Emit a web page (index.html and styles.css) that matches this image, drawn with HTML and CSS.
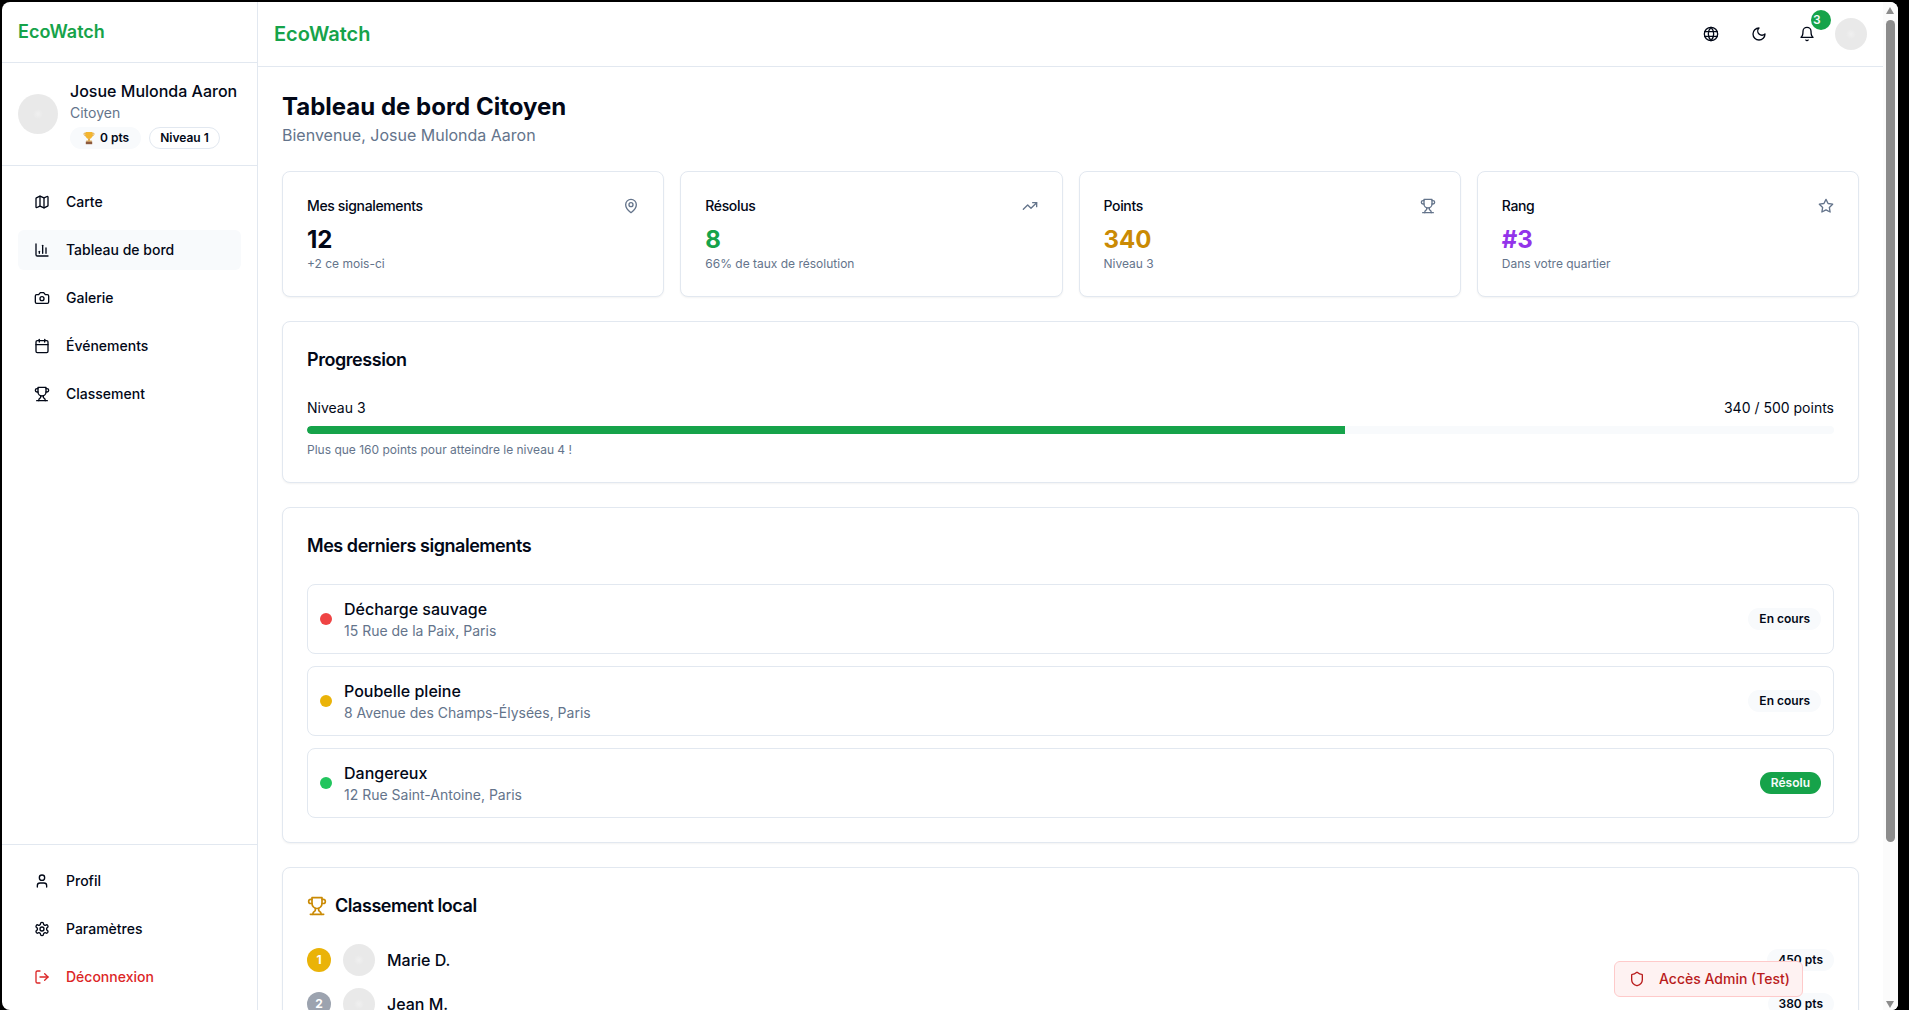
FILE: index.html
```html
<!DOCTYPE html>
<html lang="fr">
<head>
<meta charset="utf-8">
<title>EcoWatch</title>
<link rel="stylesheet" href="styles.css">
</head>
<body>
<svg class="sprite" xmlns="http://www.w3.org/2000/svg">
  <symbol id="i-map" viewBox="0 0 24 24"><path d="M14.106 5.553a2 2 0 0 0 1.788 0l3.659-1.83A1 1 0 0 1 21 4.619v12.764a1 1 0 0 1-.553.894l-4.553 2.277a2 2 0 0 1-1.788 0l-4.212-2.106a2 2 0 0 0-1.788 0l-3.659 1.83A1 1 0 0 1 3 19.381V6.618a1 1 0 0 1 .553-.894l4.553-2.277a2 2 0 0 1 1.788 0z"/><path d="M15 5.764v15"/><path d="M9 3.236v15"/></symbol>
  <symbol id="i-chart" viewBox="0 0 24 24"><path d="M3 3v16a2 2 0 0 0 2 2h16"/><path d="M18 17V9"/><path d="M13 17V5"/><path d="M8 17v-3"/></symbol>
  <symbol id="i-camera" viewBox="0 0 24 24"><path d="M14.5 4h-5L7 7H4a2 2 0 0 0-2 2v9a2 2 0 0 0 2 2h16a2 2 0 0 0 2-2V9a2 2 0 0 0-2-2h-3l-2.5-3z"/><circle cx="12" cy="13" r="3"/></symbol>
  <symbol id="i-calendar" viewBox="0 0 24 24"><path d="M8 2v4"/><path d="M16 2v4"/><rect width="18" height="18" x="3" y="4" rx="2"/><path d="M3 10h18"/></symbol>
  <symbol id="i-trophy" viewBox="0 0 24 24"><path d="M6 9H4.5a2.5 2.5 0 0 1 0-5H6"/><path d="M18 9h1.5a2.5 2.5 0 0 0 0-5H18"/><path d="M4 22h16"/><path d="M10 14.66V17c0 .55-.47.98-.97 1.21C7.85 18.75 7 20.24 7 22"/><path d="M14 14.66V17c0 .55.47.98.97 1.21C16.15 18.75 17 20.24 17 22"/><path d="M18 2H6v7a6 6 0 0 0 12 0V2Z"/></symbol>
  <symbol id="i-user" viewBox="0 0 24 24"><path d="M19 21v-2a4 4 0 0 0-4-4H9a4 4 0 0 0-4 4v2"/><circle cx="12" cy="7" r="4"/></symbol>
  <symbol id="i-settings" viewBox="0 0 24 24"><path d="M12.22 2h-.44a2 2 0 0 0-2 2v.18a2 2 0 0 1-1 1.73l-.43.25a2 2 0 0 1-2 0l-.15-.08a2 2 0 0 0-2.73.73l-.22.38a2 2 0 0 0 .73 2.73l.15.1a2 2 0 0 1 1 1.72v.51a2 2 0 0 1-1 1.74l-.15.09a2 2 0 0 0-.73 2.73l.22.38a2 2 0 0 0 2.73.73l.15-.08a2 2 0 0 1 2 0l.43.25a2 2 0 0 1 1 1.73V20a2 2 0 0 0 2 2h.44a2 2 0 0 0 2-2v-.18a2 2 0 0 1 1-1.73l.43-.25a2 2 0 0 1 2 0l.15.08a2 2 0 0 0 2.73-.73l.22-.39a2 2 0 0 0-.73-2.73l-.15-.08a2 2 0 0 1-1-1.74v-.5a2 2 0 0 1 1-1.74l.15-.09a2 2 0 0 0 .73-2.73l-.22-.38a2 2 0 0 0-2.73-.73l-.15.08a2 2 0 0 1-2 0l-.43-.25a2 2 0 0 1-1-1.73V4a2 2 0 0 0-2-2z"/><circle cx="12" cy="12" r="3"/></symbol>
  <symbol id="i-logout" viewBox="0 0 24 24"><path d="M9 21H5a2 2 0 0 1-2-2V5a2 2 0 0 1 2-2h4"/><polyline points="16 17 21 12 16 7"/><line x1="21" x2="9" y1="12" y2="12"/></symbol>
  <symbol id="i-globe" viewBox="0 0 24 24"><circle cx="12" cy="12" r="10"/><path d="M12 2a14.5 14.5 0 0 0 0 20 14.5 14.5 0 0 0 0-20"/><path d="M2.6 8.500h18.800"/><path d="M2.600 15.500h18.800"/></symbol>
  <symbol id="i-moon" viewBox="0 0 24 24"><path d="M12 3a6 6 0 0 0 9 9 9 9 0 1 1-9-9Z"/></symbol>
  <symbol id="i-bell" viewBox="0 0 24 24"><path d="M6 8a6 6 0 0 1 12 0c0 7 3 9 3 9H3s3-2 3-9"/><path d="M10.3 21a1.94 1.94 0 0 0 3.4 0"/></symbol>
  <symbol id="i-pin" viewBox="0 0 24 24"><path d="M20 10c0 6-8 12-8 12s-8-6-8-12a8 8 0 0 1 16 0Z"/><circle cx="12" cy="10" r="3"/></symbol>
  <symbol id="i-trend" viewBox="0 0 24 24"><polyline points="22 7 13.5 15.5 8.5 10.5 2 17"/><polyline points="16 7 22 7 22 13"/></symbol>
  <symbol id="i-star" viewBox="0 0 24 24"><polygon points="12 2 15.09 8.26 22 9.27 17 14.14 18.18 21.02 12 17.77 5.82 21.02 7 14.14 2 9.27 8.91 8.26 12 2"/></symbol>
  <symbol id="i-shield" viewBox="0 0 24 24"><path d="M20 13c0 5-3.5 7.5-7.66 8.95a1 1 0 0 1-.67-.01C7.5 20.5 4 18 4 13V6a1 1 0 0 1 1-1c2 0 4.5-1.2 6.24-2.72a1.17 1.17 0 0 1 1.52 0C14.51 3.81 17 5 19 5a1 1 0 0 1 1 1z"/></symbol>
</svg>

<div class="window">
  <aside class="sidebar">
    <div class="side-logo">EcoWatch</div>
    <div class="side-user">
      <div class="avatar avatar-40"></div>
      <div class="user-info">
        <div class="user-name">Josue Mulonda Aaron</div>
        <div class="user-role">Citoyen</div>
        <div class="user-badges">
          <span class="badge badge-soft badge-pts">
            <svg class="emoji" viewBox="0 0 12 14" xmlns="http://www.w3.org/2000/svg"><path d="M1.2 2.2h1.6v2.8c-1 0-1.8-1-1.8-2.2zM10.8 2.2H9.2v2.8c1 0 1.8-1 1.8-2.2z" fill="none" stroke="#e0a030" stroke-width=".9"/><path d="M2.6 1h6.8v3.4c0 2-1.5 3.4-3.4 3.4S2.6 6.400 2.6 4.400z" fill="#f3b52f"/><rect x="5.200" y="7.600" width="1.600" height="2.200" fill="#d9962a"/><rect x="3.200" y="9.600" width="5.600" height="1" fill="#e0a030"/><rect x="2.800" y="10.600" width="6.400" height="2.600" fill="#8d5a3c"/></svg>
            0 pts
          </span>
          <span class="badge badge-outline">Niveau 1</span>
        </div>
      </div>
    </div>
    <nav class="side-nav">
      <a class="nav-item"><svg class="icon"><use href="#i-map"/></svg>Carte</a>
      <a class="nav-item is-active"><svg class="icon"><use href="#i-chart"/></svg>Tableau de bord</a>
      <a class="nav-item"><svg class="icon"><use href="#i-camera"/></svg>Galerie</a>
      <a class="nav-item"><svg class="icon"><use href="#i-calendar"/></svg>Événements</a>
      <a class="nav-item"><svg class="icon"><use href="#i-trophy"/></svg>Classement</a>
    </nav>
    <div class="side-footer">
      <a class="nav-item"><svg class="icon"><use href="#i-user"/></svg>Profil</a>
      <a class="nav-item"><svg class="icon"><use href="#i-settings"/></svg>Paramètres</a>
      <a class="nav-item nav-danger"><svg class="icon"><use href="#i-logout"/></svg>Déconnexion</a>
    </div>
  </aside>

  <div class="page">
    <header class="topbar">
      <div class="top-logo">EcoWatch</div>
      <div class="top-actions">
        <button class="icon-btn"><svg class="icon"><use href="#i-globe"/></svg></button>
        <button class="icon-btn"><svg class="icon"><use href="#i-moon"/></svg></button>
        <button class="icon-btn"><svg class="icon"><use href="#i-bell"/></svg><span class="notif">3</span></button>
        <div class="avatar avatar-32"></div>
      </div>
    </header>

    <main class="content">
      <div class="page-head">
        <h1>Tableau de bord Citoyen</h1>
        <p>Bienvenue, Josue Mulonda Aaron</p>
      </div>

      <section class="stats">
        <article class="card stat">
          <div class="stat-top"><span>Mes signalements</span><svg class="icon muted"><use href="#i-pin"/></svg></div>
          <div class="stat-value">12</div>
          <div class="stat-sub">+2 ce mois-ci</div>
        </article>
        <article class="card stat">
          <div class="stat-top"><span>Résolus</span><svg class="icon muted"><use href="#i-trend"/></svg></div>
          <div class="stat-value c-green">8</div>
          <div class="stat-sub">66% de taux de résolution</div>
        </article>
        <article class="card stat">
          <div class="stat-top"><span>Points</span><svg class="icon muted"><use href="#i-trophy"/></svg></div>
          <div class="stat-value c-amber">340</div>
          <div class="stat-sub">Niveau 3</div>
        </article>
        <article class="card stat">
          <div class="stat-top"><span>Rang</span><svg class="icon muted"><use href="#i-star"/></svg></div>
          <div class="stat-value c-purple">#3</div>
          <div class="stat-sub">Dans votre quartier</div>
        </article>
      </section>

      <section class="card panel">
        <h2>Progression</h2>
        <div class="progress-labels"><span>Niveau 3</span><span>340 / 500 points</span></div>
        <div class="progress"><div class="progress-fill"></div></div>
        <p class="progress-note">Plus que 160 points pour atteindre le niveau 4 !</p>
      </section>

      <section class="card panel">
        <h2>Mes derniers signalements</h2>
        <div class="reports">
          <div class="report">
            <span class="dot dot-red"></span>
            <div class="report-text"><div class="report-title">Décharge sauvage</div><div class="report-addr">15 Rue de la Paix, Paris</div></div>
            <span class="badge badge-soft">En cours</span>
          </div>
          <div class="report">
            <span class="dot dot-yellow"></span>
            <div class="report-text"><div class="report-title">Poubelle pleine</div><div class="report-addr">8 Avenue des Champs-Élysées, Paris</div></div>
            <span class="badge badge-soft">En cours</span>
          </div>
          <div class="report">
            <span class="dot dot-green"></span>
            <div class="report-text"><div class="report-title">Dangereux</div><div class="report-addr">12 Rue Saint-Antoine, Paris</div></div>
            <span class="badge badge-green">Résolu</span>
          </div>
        </div>
      </section>

      <section class="card panel">
        <h2 class="title-icon"><svg class="icon icon-20 c-amber"><use href="#i-trophy"/></svg>Classement local</h2>
        <div class="ranks">
          <div class="rank-row"><span class="rank rank-1">1</span><div class="avatar avatar-32"></div><span class="rank-name">Marie D.</span><span class="badge badge-soft">450 pts</span></div>
          <div class="rank-row"><span class="rank rank-2">2</span><div class="avatar avatar-32"></div><span class="rank-name">Jean M.</span><span class="badge badge-soft">380 pts</span></div>
        </div>
      </section>
    </main>
  </div>

  <div class="scrollbar" aria-hidden="true">
    <span class="arrow-up"></span>
    <span class="thumb"></span>
    <span class="arrow-down"></span>
  </div>
</div>

<button class="admin-btn"><svg class="icon"><use href="#i-shield"/></svg>Accès Admin (Test)</button>
</body>
</html>
```

FILE: styles.css
```css
* { box-sizing: border-box; }
html, body { height: 100%; margin: 0; }
body {
  background: #000;
  overflow: hidden;
  padding: 2px 11px 0 2px;
  font-family: Inter, "Noto Sans", sans-serif;
  color: #020817;
}
.sprite { position: absolute; width: 0; height: 0; }

.window {
  display: flex;
  height: 100%;
  background: #fff;
  border-radius: 8px 8px 6px 8px;
  overflow: hidden;
}

.icon {
  width: 16px;
  height: 16px;
  flex: none;
  fill: none;
  stroke: currentColor;
  stroke-width: 2;
  stroke-linecap: round;
  stroke-linejoin: round;
}
.icon-20 { width: 20px; height: 20px; }
.muted { color: #64748b; }
.c-green { color: #16a34a; }
.c-amber { color: #ca8a04; }
.c-purple { color: #9333ea; }

.avatar {
  flex: none;
  border-radius: 50%;
  background: radial-gradient(circle, #f0f0f0 0, #e9e9e9 5px);
}
.avatar-40 { width: 40px; height: 40px; }
.avatar-32 { width: 32px; height: 32px; }

/* Sidebar */
.sidebar {
  width: 256px;
  flex: none;
  display: flex;
  flex-direction: column;
  border-right: 1px solid #e2e8f0;
}
.side-logo {
  padding: 16px;
  height: 61px;
  border-bottom: 1px solid #e2e8f0;
  font-size: 18px;
  line-height: 28px;
  font-weight: 600;
  color: #16a34a;
}
.side-user {
  display: flex;
  align-items: center;
  gap: 12px;
  padding: 16px;
  height: 103px;
  border-bottom: 1px solid #e2e8f0;
}
.user-name { font-size: 16px; line-height: 24px; font-weight: 500; white-space: nowrap; }
.user-role { font-size: 14px; line-height: 20px; color: #64748b; }
.user-badges { display: flex; gap: 8px; margin-top: 4px; }

.side-nav {
  flex: 1;
  display: flex;
  flex-direction: column;
  gap: 8px;
  padding: 16px;
}
.side-footer {
  display: flex;
  flex-direction: column;
  gap: 8px;
  padding: 16px 16px 13px;
  border-top: 1px solid #e2e8f0;
}
.nav-item {
  display: flex;
  align-items: center;
  gap: 16px;
  height: 40px;
  padding: 0 16px;
  border-radius: 6px;
  font-size: 14px;
  line-height: 20px;
  font-weight: 500;
}
.is-active { background: #f8fafc; }
.nav-danger { color: #dc2626; }

/* Badges */
.badge {
  display: inline-flex;
  align-items: center;
  flex: none;
  height: 22px;
  padding: 0 10px;
  border-radius: 999px;
  border: 1px solid transparent;
  font-size: 12px;
  line-height: 16px;
  font-weight: 600;
  white-space: nowrap;
}
.badge-soft { background: #f8fafc; }
.badge-outline { border-color: #e2e8f0; }
.badge-green { background: #16a34a; color: #f8fafc; }
.badge-pts { gap: 5px; padding: 0 11px 0 12px; }
.emoji { width: 12px; height: 14px; flex: none; }

/* Page */
.page {
  flex: 1;
  min-width: 0;
  overflow: hidden;
}

.scrollbar {
  width: 15px;
  flex: none;
  display: flex;
  flex-direction: column;
  padding-left: 3px;
  background: #fbfbfb;
}
.thumb {
  width: 9px;
  height: 822px;
  margin-top: 6px;
  border-radius: 5px;
  background: #8c8c8c;
}
.arrow-up, .arrow-down {
  width: 0;
  height: 0;
  border-left: 4.5px solid transparent;
  border-right: 4.5px solid transparent;
}
.arrow-up { margin-top: 5px; border-bottom: 7px solid #8c8c8c; }
.arrow-down { margin-top: auto; margin-bottom: 2px; border-top: 7px solid #8c8c8c; }

.topbar {
  display: flex;
  align-items: center;
  justify-content: space-between;
  height: 65px;
  padding: 0 16px;
  border-bottom: 1px solid #e2e8f0;
}
.top-logo { font-size: 20px; line-height: 28px; font-weight: 600; color: #16a34a; }
.top-actions { display: flex; align-items: center; gap: 8px; }
.icon-btn {
  position: relative;
  display: flex;
  align-items: center;
  justify-content: center;
  width: 40px;
  height: 40px;
  padding: 0;
  border: 0;
  background: none;
  color: #020817;
}
.notif {
  position: absolute;
  top: -4px;
  left: 24px;
  width: 20px;
  height: 20px;
  padding-left: 2px;
  border-radius: 50%;
  background: #16a34a;
  color: #f8fafc;
  font-family: Inter, sans-serif;
  font-size: 12px;
  line-height: 20px;
  font-weight: 600;
  text-align: left;
}

.content {
  display: flex;
  flex-direction: column;
  gap: 24px;
  padding: 24px;
}
.page-head h1 { margin: 0; font-size: 24px; line-height: 32px; font-weight: 700; }
.page-head p { margin: 0; font-size: 16px; line-height: 24px; color: #64748b; }

.card {
  background: #fff;
  border: 1px solid #e2e8f0;
  border-radius: 8px;
  box-shadow: 0 1px 2px rgba(0, 0, 0, .05);
}
.stats { display: grid; grid-template-columns: repeat(4, 1fr); gap: 16px; }
.stat { padding: 24px; height: 126px; }
.stat-top {
  display: flex;
  align-items: center;
  justify-content: space-between;
  height: 20px;
  margin-bottom: 8px;
  font-size: 14px;
  line-height: 20px;
  font-weight: 500;
  letter-spacing: -0.025em;
}
.stat-value { font-size: 24px; line-height: 32px; font-weight: 700; }
.stat-sub { font-size: 12px; line-height: 16px; color: #64748b; }

.panel { padding: 24px; }
.panel h2 { margin: 0 0 24px; font-size: 18px; line-height: 28px; font-weight: 600; letter-spacing: -0.025em; }
.title-icon { display: flex; align-items: center; gap: 8px; }

.progress-labels { display: flex; justify-content: space-between; font-size: 14px; line-height: 20px; }
.progress { height: 8px; margin-top: 8px; border-radius: 999px; background: #f8fafc; overflow: hidden; }
.progress-fill { width: 68%; height: 100%; border-radius: 999px 0 0 999px; background: #16a34a; }
.progress-note { margin: 8px 0 0; font-size: 12px; line-height: 16px; color: #64748b; }

.reports { display: flex; flex-direction: column; gap: 12px; }
.report {
  display: flex;
  align-items: center;
  gap: 12px;
  padding: 12px;
  border: 1px solid #e2e8f0;
  border-radius: 8px;
}
.report-text { flex: 1; min-width: 0; }
.report-title { font-size: 16px; line-height: 24px; font-weight: 500; }
.report-addr { font-size: 14px; line-height: 20px; color: #64748b; }
.dot { width: 12px; height: 12px; flex: none; border-radius: 50%; }
.dot-red { background: #ef4444; }
.dot-yellow { background: #eab308; }
.dot-green { background: #22c55e; }

.ranks { display: flex; flex-direction: column; gap: 12px; }
.rank-row { display: flex; align-items: center; gap: 12px; }
.rank {
  width: 24px;
  height: 24px;
  flex: none;
  border-radius: 50%;
  color: #fff;
  font-size: 12px;
  line-height: 24px;
  font-weight: 700;
  text-align: center;
}
.rank-1 { background: #eab308; }
.rank-2 { background: #9ca3af; }
.rank-name { flex: 1; font-size: 16px; line-height: 24px; font-weight: 500; }

.admin-btn {
  position: fixed;
  left: 1614px;
  top: 961px;
  display: flex;
  align-items: center;
  gap: 14px;
  width: 189px;
  height: 36px;
  padding: 0 14px;
  border: 1px solid #fecaca;
  border-radius: 6px;
  background: #fef2f2;
  color: #b91c1c;
  font-family: inherit;
  font-size: 14px;
  line-height: 20px;
  font-weight: 500;
  white-space: nowrap;
}
```
